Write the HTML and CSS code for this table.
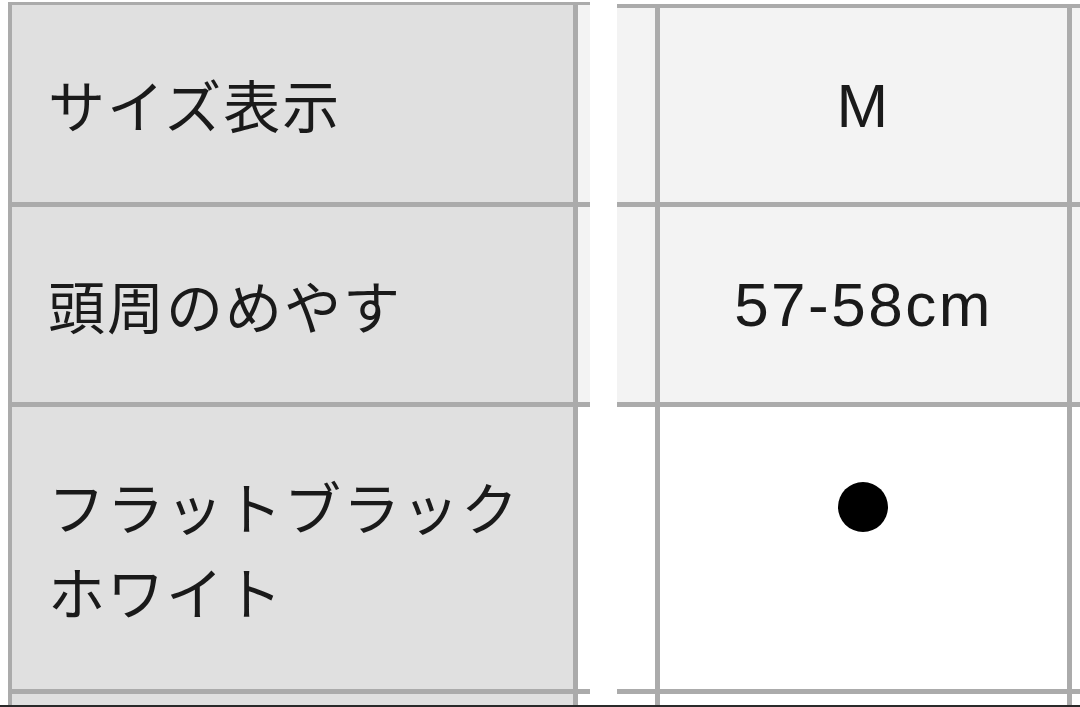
FILE: index.html
```html
<!DOCTYPE html>
<html lang="ja">
<head>
<meta charset="utf-8">
<title>サイズ表</title>
<link rel="stylesheet" href="styles.css">
</head>
<body>
<main class="page">
  <section class="panel panel-left">
    <div class="grid grid-left">
      <div class="cell label">サイズ表示</div>
      <div class="cell tint"></div>
      <div class="cell label">頭周のめやす</div>
      <div class="cell tint"></div>
      <div class="cell label">フラットブラック<br>ホワイト</div>
      <div class="cell plain"></div>
      <div class="cell label"></div>
      <div class="cell plain"></div>
    </div>
  </section>
  <section class="panel panel-right">
    <div class="grid grid-right">
      <div class="cell tint"></div>
      <div class="cell tint value">M</div>
      <div class="cell tint"></div>
      <div class="cell tint"></div>
      <div class="cell tint value">57-58cm</div>
      <div class="cell tint"></div>
      <div class="cell plain"></div>
      <div class="cell plain mark"><span class="dot" role="img" aria-label="●"></span></div>
      <div class="cell plain"></div>
      <div class="cell plain"></div>
      <div class="cell plain"></div>
      <div class="cell plain"></div>
    </div>
  </section>
</main>
<div class="edge"></div>
</body>
</html>
```

FILE: styles.css
```css
html, body {
  margin: 0;
  padding: 0;
  background: #ffffff;
}

body {
  width: 1080px;
  height: 707px;
  overflow: hidden;
  display: flex;
  flex-direction: column;
}

.page {
  height: 705px;
  overflow: hidden;
  display: flex;
  flex-direction: row;
  align-items: flex-start;
  gap: 27px;
  padding-left: 8px;
}

.panel {
  flex: none;
  overflow: hidden;
}

.panel-left {
  width: 582px;
  margin-top: 2px;
}

.panel-right {
  width: 463px;
  margin-top: 4px;
}

.grid {
  display: grid;
  gap: 5px;
  background: #ababab;
}

.grid-left {
  grid-template-columns: 561px 12px;
  grid-template-rows: 197px 195px 282px 40px;
  padding: 3px 0 0 4px;
}

.grid-right {
  grid-template-columns: 38px 407px 40px;
  grid-template-rows: 194px 195px 282px 40px;
  padding-top: 4px;
}

.cell {
  display: flex;
  align-items: center;
}

.label {
  background: #e0e0e0;
  padding-left: 36px;
  font-family: "Noto Sans CJK JP", "Noto Sans", sans-serif;
  font-size: 57px;
  letter-spacing: 2px;
  line-height: 85px;
  color: #1a1a1a;
}

.tint {
  background: #f3f3f3;
}

.plain {
  background: #ffffff;
}

.value {
  justify-content: center;
  font-family: "Liberation Sans", Arial, sans-serif;
  font-size: 62px;
  letter-spacing: 2.5px;
  color: #1a1a1a;
}

.mark {
  justify-content: center;
  align-items: flex-start;
  padding-top: 75px;
}

.dot {
  display: block;
  width: 50px;
  height: 50px;
  border-radius: 50%;
  background: #000000;
  margin-left: -2px;
}

.edge {
  height: 2px;
  background: #2a2a2a;
  flex: none;
}
```
